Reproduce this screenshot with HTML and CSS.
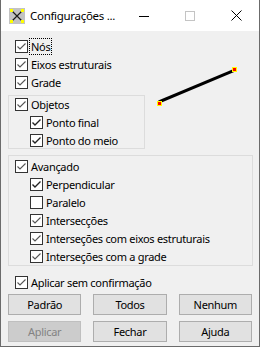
FILE: index.html
```html
<!DOCTYPE html>
<html lang="pt">
<head>
<meta charset="utf-8">
<link rel="stylesheet" href="styles.css">
</head>
<body>
<div class="window">
  <div class="titlebar">
    <svg class="app-icon" width="16" height="16" viewBox="0 0 16 16">
      <rect x="0" y="0" width="16" height="16" fill="#c3c3c3"/>
      <path d="M2.5 2.5 L13.5 13.5 M13.5 2.5 L2.5 13.5" stroke="#1a1a1a" stroke-width="1.2"/>
      <rect x="1" y="1" width="3" height="3" fill="#ffff00"/>
      <rect x="12" y="1" width="3" height="3" fill="#ffff00"/>
      <rect x="1" y="12" width="3" height="3" fill="#ffff00"/>
      <rect x="12" y="12" width="3" height="3" fill="#ffff00"/>
    </svg>
    <span class="title">Configurações ...</span>
    <div class="controls">
      <span class="ctl"><svg width="10" height="10" viewBox="0 0 10 10"><path d="M0 5.5 H10" stroke="#000" stroke-width="1"/></svg></span>
      <span class="ctl"><svg width="10" height="10" viewBox="0 0 10 10"><rect x="0.5" y="0.5" width="9" height="9" fill="none" stroke="#c4c4c4" stroke-width="1"/></svg></span>
      <span class="ctl"><svg width="11" height="11" viewBox="0 0 11 11"><path d="M0.5 0.5 L10.5 10.5 M10.5 0.5 L0.5 10.5" stroke="#000" stroke-width="1"/></svg></span>
    </div>
  </div>

  <div class="content">
    <div class="top">
      <div class="left">
        <div class="rows">
          <div class="cb"><span class="box"><svg class="check" viewBox="0 0 11 11"><path d="M1.5 5.5 L4 8 L9.5 2.5" /></svg></span><span class="text focus">Nós</span></div>
          <div class="cb"><span class="box"><svg class="check" viewBox="0 0 11 11"><path d="M1.5 5.5 L4 8 L9.5 2.5" /></svg></span><span class="text">Eixos estruturais</span></div>
          <div class="cb"><span class="box"><svg class="check" viewBox="0 0 11 11"><path d="M1.5 5.5 L4 8 L9.5 2.5" /></svg></span><span class="text">Grade</span></div>
        </div>
        <div class="group group-objetos">
          <div class="rows">
            <div class="cb"><span class="box"><svg class="check" viewBox="0 0 11 11"><path d="M1.5 5.5 L4 8 L9.5 2.5" /></svg></span><span class="text">Objetos</span></div>
            <div class="cb sub"><span class="box dark"><svg class="check" viewBox="0 0 11 11"><path d="M1.5 5.5 L4 8 L9.5 2.5" /></svg></span><span class="text">Ponto final</span></div>
            <div class="cb sub"><span class="box dark"><svg class="check" viewBox="0 0 11 11"><path d="M1.5 5.5 L4 8 L9.5 2.5" /></svg></span><span class="text">Ponto do meio</span></div>
          </div>
        </div>
      </div>
      <div class="preview">
        <svg width="82" height="42" viewBox="0 0 82 42">
          <path d="M4 35.5 L78 4.5" stroke="#000" stroke-width="3" stroke-linecap="square"/>
          <rect x="1.5" y="35.5" width="4" height="4" fill="#ff0000" stroke="#ffff00" stroke-width="1"/>
          <rect x="76.5" y="1.5" width="4" height="4" fill="#ff0000" stroke="#ffff00" stroke-width="1"/>
        </svg>
      </div>
    </div>

    <div class="group group-avancado">
      <div class="rows">
        <div class="cb"><span class="box"><svg class="check" viewBox="0 0 11 11"><path d="M1.5 5.5 L4 8 L9.5 2.5" /></svg></span><span class="text">Avançado</span></div>
        <div class="cb sub"><span class="box dark"><svg class="check" viewBox="0 0 11 11"><path d="M1.5 5.5 L4 8 L9.5 2.5" /></svg></span><span class="text">Perpendicular</span></div>
        <div class="cb sub"><span class="box dark"></span><span class="text">Paralelo</span></div>
        <div class="cb sub"><span class="box"><svg class="check" viewBox="0 0 11 11"><path d="M1.5 5.5 L4 8 L9.5 2.5" /></svg></span><span class="text">Intersecções</span></div>
        <div class="cb sub"><span class="box"><svg class="check" viewBox="0 0 11 11"><path d="M1.5 5.5 L4 8 L9.5 2.5" /></svg></span><span class="text">Interseções com eixos estruturais</span></div>
        <div class="cb sub"><span class="box"><svg class="check" viewBox="0 0 11 11"><path d="M1.5 5.5 L4 8 L9.5 2.5" /></svg></span><span class="text">Interseções com a grade</span></div>
      </div>
    </div>

    <div class="cb apply"><span class="box"><svg class="check" viewBox="0 0 11 11"><path d="M1.5 5.5 L4 8 L9.5 2.5" /></svg></span><span class="text">Aplicar sem confirmação</span></div>

    <div class="buttons">
      <button class="btn">Padrão</button>
      <button class="btn">Todos</button>
      <button class="btn">Nenhum</button>
      <button class="btn" disabled>Aplicar</button>
      <button class="btn">Fechar</button>
      <button class="btn">Ajuda</button>
    </div>
  </div>
</div>
</body>
</html>
```

FILE: styles.css
```css
* { box-sizing: border-box; }

body {
  margin: 0;
  background: #ffffff;
  font-family: "Noto Sans", "Open Sans", sans-serif;
  font-size: 11px;
  letter-spacing: -0.3px;
  color: #000;
}

.window {
  width: 260px;
  height: 347px;
  border: 1px solid #6b6b6b;
  border-top: none;
  background: #f0f0f0;
  display: flex;
  flex-direction: column;
}

.titlebar {
  height: 31px;
  background: #ffffff;
  display: flex;
  align-items: center;
  padding-left: 8px;
  flex-shrink: 0;
}

.app-icon {
  display: block;
  flex-shrink: 0;
}

.title {
  margin-left: 5px;
  font-size: 11.5px;
  white-space: nowrap;
}

.controls {
  margin-left: auto;
  display: flex;
  height: 100%;
}

.ctl {
  width: 46px;
  height: 100%;
  display: flex;
  align-items: center;
  justify-content: center;
}

.ctl svg { display: block; }

.content {
  flex: 1;
  padding: 9px 6px 0 7px;
  display: flex;
  flex-direction: column;
}

.top {
  display: flex;
}

.left {
  width: 137px;
  flex-shrink: 0;
}

.left > .rows {
  padding-left: 7px;
}

.preview {
  margin-left: 11px;
  margin-top: 26px;
}

.preview svg { display: block; }

.rows {
  display: flex;
  flex-direction: column;
  gap: 5px;
}

.cb {
  display: flex;
  align-items: center;
  height: 13px;
  white-space: nowrap;
}

.cb.sub {
  padding-left: 15px;
}

.box {
  width: 13px;
  height: 13px;
  flex-shrink: 0;
  background: #ffffff;
  border: 1px solid #333333;
  display: block;
}

.check {
  display: block;
  width: 11px;
  height: 11px;
  fill: none;
  stroke: #555555;
  stroke-width: 1.1;
}

.box.dark .check {
  stroke: #222222;
  stroke-width: 1.4;
}

.text {
  margin-left: 3px;
  line-height: 15px;
}

.focus {
  outline: 1px dotted #000;
  outline-offset: 0;
  padding: 0 1px;
  margin-left: 2px;
}

.group {
  border: 1px solid #dcdcdc;
}

.group-objetos {
  margin-top: 6px;
  padding: 2px 0 1px 6px;
}

.group-avancado {
  margin-top: 6px;
  padding: 4px 0 2px 6px;
}

.apply {
  margin-top: 10px;
  padding-left: 7px;
}

.buttons {
  margin-top: 5px;
  margin-right: 1px;
  display: grid;
  grid-template-columns: repeat(3, 1fr);
  column-gap: 12px;
  row-gap: 6px;
}

.btn {
  height: 21px;
  border: 1px solid #adadad;
  background: #e1e1e1;
  font-family: inherit;
  font-size: 11px;
  letter-spacing: inherit;
  color: #000;
  padding: 0;
  line-height: 17px;
}

.btn:disabled {
  background: #cccccc;
  border-color: #bfbfbf;
  color: #838383;
}
```
